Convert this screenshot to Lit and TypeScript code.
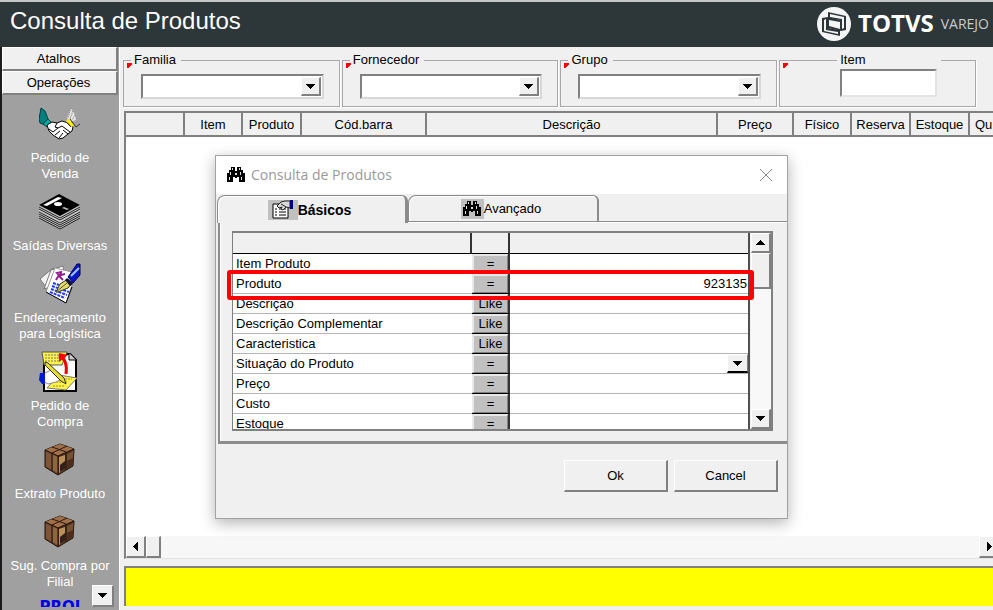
import { LitElement, html, css } from "lit";
import { customElement } from "lit/decorators.js";
import { classMap } from "lit/directives/class-map.js";

const arrow = (dir: "down" | "up" | "left" | "right") => {
  const d = {
    down: "M0 0H9V1H8V2H7V3H6V4H5V5H4V4H3V3H2V2H1V1H0Z",
    up: "M4 0H5V1H6V2H7V3H8V4H9V5H0V4H1V3H2V2H3V1H4Z",
    left: "M5 0V9H4V8H3V7H2V6H1V5H0V4H1V3H2V2H3V1H4V0Z",
    right: "M0 0V9H1V8H2V7H3V6H4V5H5V4H4V3H3V2H2V1H1V0Z",
  }[dir];
  const flat = dir === "down" || dir === "up";
  return html`<svg width=${flat ? 9 : 5} height=${flat ? 5 : 9} viewBox=${flat ? "0 0 9 5" : "0 0 5 9"} aria-hidden="true"><path d=${d} fill="#000" /></svg>`;
};

const handshake = html`<svg width="42" height="34" viewBox="0 0 42 34" aria-hidden="true">
  <path d="M2 1L6 4 9 12 6 18 1 16 0 12Z" fill="#008080" stroke="#003c3c" />
  <path d="M4 17L9 12 12 15 8 20Z" fill="#00a8a8" stroke="#004848" />
  <path d="M8 18L13 15 18 16 23 14 29 16 34 20 33 24 29 27 24 31 20 32 14 28 10 24Z" fill="#fff" stroke="#000" />
  <path d="M18 16L16 20 19 21 23 19 31 25M14 25L19 21M16 28L21 24M20 31L24 26M24 23L29 27M10 22L14 25" fill="none" stroke="#000" />
  <path d="M32 1L36 8 37 13 31 15 28 11Z" fill="#e4e4e4" />
  <path d="M32 1L29 11M34 4L31 12M36 8L33 13" stroke="#777" fill="none" stroke-dasharray="1 1" />
  <path d="M28 13L34 19" stroke="#ffee00" stroke-width="3" />
  <path d="M27 15L32 20M31 12L37 20 41 17" stroke="#333" fill="none" />
</svg>`;

const disks = html`<svg width="42" height="36" viewBox="0 0 42 36" aria-hidden="true">
  <path d="M0 11L20 0 41 11V24L21 35 0 24Z" fill="#c4c4c4" />
  <path d="M0 13L21 24 41 13M0 15L21 26 41 15M0 18L21 29 41 18M0 20L21 31 41 20M0 22L21 33 41 22M0 24L21 35 41 24" fill="none" stroke="#222" />
  <path d="M0 11L20 0 41 11 21 22Z" fill="#000" />
  <path d="M4 11L19 3 23 4 8 12Z" fill="#fff" />
  <ellipse cx="19" cy="10" rx="4" ry="2" fill="#fff" />
  <path d="M23 14L25 13 30 15 28 16Z" fill="#bbb" />
</svg>`;

const notes = html`<svg width="42" height="42" viewBox="0 0 42 42" aria-hidden="true">
  <path d="M1 16L14 5 24 17 7 24Z" fill="#f2f2f2" stroke="#777" />
  <path d="M5 26L12 7 24 3 26 18Z" fill="#fff" stroke="#777" />
  <path d="M16 5L37 10 27 40 7 29Z" fill="#fff" stroke="#999" />
  <path d="M33 24L27 40 7 29" fill="none" stroke="#000" />
  <path d="M17 17L20 12 18 10 22 9 21 14 24 17M22 12L26 11" stroke="#90208c" stroke-width="2" fill="none" />
  <path d="M14 20L20 22M13 23L30 29M12 26L28 32M11 29L26 35" stroke="#2038ff" stroke-width="2" stroke-dasharray="3 1" />
  <path d="M17 29L21 21 29 16 33 20 29 25 19 29Z" fill="#e8dc60" stroke="#333" />
  <path d="M17 29L28 20" stroke="#555" />
  <path d="M28 15L34 21 31 23 26 17Z" fill="#101040" />
  <path d="M29 14L38 1H41V12L34 20Z" fill="#0818c8" stroke="#000050" />
  <path d="M32 13L40 5" stroke="#a0c8ff" stroke-width="2" />
</svg>`;

const order = html`<svg width="42" height="42" viewBox="0 0 42 42" aria-hidden="true">
  <path d="M5 3H31L37 9V40H5Z" fill="#fff" stroke="#000" stroke-width="2" />
  <path d="M30 2V9H37" fill="#ccc" stroke="#000" />
  <path d="M3 1H28L23 14H5Z" fill="#fff34a" stroke="#555" />
  <path d="M6 4H24M6 7H23M6 10H21" stroke="#777" stroke-dasharray="2 1" />
  <path d="M20 4Q29 9 27 23" fill="none" stroke="#f00000" stroke-width="3" />
  <path d="M20 11L20 2 29 4Z" fill="#f00" />
  <path d="M8 37L20 24 38 27 27 39Z" fill="#fff34a" stroke="#777" />
  <path d="M14 35H25M17 31H29M20 28H33" stroke="#9a9020" stroke-dasharray="2 1" />
  <path d="M4 23L12 19 20 22 25 27 17 31 9 33 4 30Z" fill="#fff" stroke="#888" />
  <path d="M1 22H6V33H3L0 29Z" fill="#0018d0" />
  <path d="M6 11L9 12 25 27 27 33 22 30 6 14Z" fill="#e8dc30" stroke="#333" />
</svg>`;

const box = html`<svg width="34" height="34" viewBox="0 0 34 34" aria-hidden="true">
  <path d="M2 7L17 1 31 6 30 23 15 32 2 24Z" fill="#6d462d" stroke="#1c100a" />
  <path d="M2 7L17 1 31 6 15 13Z" fill="#a27048" />
  <path d="M15 13L31 6 30 23 15 32Z" fill="#4c2e1c" />
  <path d="M9 4L23 9V27" fill="none" stroke="#2a1810" />
  <path d="M24 3L9 10V28" fill="none" stroke="#2a1810" />
  <path d="M3 9L8 11V26L3 23Z" fill="#7d5638" />
  <path d="M10 12L15 14V30L10 27Z" fill="#8d6540" />
  <path d="M16 14L22 12V26L16 30Z" fill="#b98f5c" />
  <path d="M17 22L22 18V26L17 29Z" fill="#342015" />
  <path d="M24 11L30 8V15L24 18Z" fill="#765034" />
  <path d="M2 7L15 13 31 6M15 13V32" fill="none" stroke="#1c100a" />
</svg>`;

const binoculars = html`<svg width="18" height="16" viewBox="0 0 18 16" aria-hidden="true">
  <path d="M4 0H8V4H10V0H14V3H16V6H18V15H12V10H10V11H8V10H6V15H0V6H2V3H4Z" fill="#000" />
  <path d="M5 1H6V3H5ZM12 1H13V3H12ZM3 5H4V8H3ZM8 6H10V8H8ZM13 5H14V8H13ZM2 10H3V13H2ZM14 10H15V13H14Z" fill="#ddd" />
</svg>`;

const propertySheet = html`<svg width="22" height="19" viewBox="0 0 22 19" aria-hidden="true">
  <path d="M1 4H16V18H1Z" fill="#fff" stroke="#000" />
  <path d="M3 9H5M7 9H14M3 12H5M7 12H14M3 15H5M7 15H14" stroke="#000" />
  <path d="M5 6L9 2 13 1 18 1V8L14 7 11 10 9 9 10 7 7 8Z" fill="#d8d8d8" stroke="#222" />
  <path d="M9 4L14 7" stroke="#222" />
  <path d="M18 0H21V9H18Z" fill="#000080" />
</svg>`;

const logo = html`<svg class="mark" width="36" height="36" viewBox="0 0 36 36" aria-hidden="true">
  <circle cx="18" cy="18" r="17" fill="#f4f6f6" />
  <path d="M12 6L30 10V24L25 25V14L12 12Z" fill="#2d3638" />
  <path d="M6 12L12 11V22L24 24V30L6 26Z" fill="#2d3638" />
  <path d="M14 8L28 11V22L26 23V13L14 11Z" fill="#f4f6f6" />
  <path d="M8 14L10 13V24L22 26V28L8 25Z" fill="#f4f6f6" />
  <path d="M12 11L25 14V25L12 22Z" fill="#2d3638" />
  <path d="M13 14L24 16V23L13 20Z" fill="#f4f6f6" />
</svg>`;

const OPERATIONS = [
  { label: "Pedido de\nVenda", icon: handshake },
  { label: "Saídas Diversas", icon: disks },
  { label: "Endereçamento\npara Logística", icon: notes },
  { label: "Pedido de\nCompra", icon: order },
  { label: "Extrato Produto", icon: box },
  { label: "Sug. Compra por\nFilial", icon: box },
];

const COLUMNS = [
  ["", "w59"], ["Item", "w58"], ["Produto", "w59"], ["Cód.barra", "w125"], ["Descrição", ""],
  ["Preço", "w76"], ["Físico", "w58"], ["Reserva", "w59"], ["Estoque", "w59"], ["Qu", "last"],
];

const CRITERIA = [
  { name: "Item Produto", op: "=" },
  { name: "Produto", op: "=", value: "923135" },
  { name: "Descrição", op: "Like" },
  { name: "Descrição Complementar", op: "Like" },
  { name: "Caracteristica", op: "Like" },
  { name: "Situação do Produto", op: "=", list: true },
  { name: "Preço", op: "=" },
  { name: "Custo", op: "=" },
  { name: "Estoque", op: "=" },
];

const base = css`
  * { box-sizing: border-box; }
  svg { display: block; flex: none; }
  button, input, select { font: inherit; color: inherit; margin: 0; border-radius: 0; outline: none; }
  .bevel {
    display: flex; align-items: center; justify-content: center; padding: 0;
    background: #f0f0f0; border: 1px solid; border-width: 1px 2px 2px 1px;
    border-color: #fff #808080 #808080 #fff;
  }
`;

@customElement("side-bar")
class SideBar extends LitElement {
  static styles = [base, css`
    :host {
      position: relative; display: flex; flex-direction: column; overflow: hidden;
      background: #a0a0a0; border-left: 2px solid #1c1c1c; border-right: 1px solid #a0a0a0;
    }
    .tab { flex: none; height: 24px; padding: 1px 2px 0 0; }
    .list { flex: 1; min-height: 0; display: flex; flex-direction: column; gap: 10px; padding-top: 9px; margin-bottom: 3px; overflow: hidden; }
    .item {
      flex: none; display: flex; flex-direction: column; align-items: center; gap: 6px;
      padding: 0 4px; border: 0; background: none; color: #fff; line-height: 16px;
    }
    .picture { display: flex; height: 40px; align-items: center; justify-content: center; }
    .label { text-align: center; white-space: pre; }
    .prom { flex: none; align-self: center; padding: 0; border: 0; background: none; color: #0000f0; font: 700 15px/14px "DejaVu Sans", sans-serif; }
    .more { position: absolute; right: 4px; bottom: 3px; width: 22px; height: 22px; }
  `];
  render() {
    return html`
      <button class="tab bevel">Atalhos</button>
      <button class="tab bevel">Operações</button>
      <div class="list">
        ${OPERATIONS.map(o => html`<button class="item"><span class="picture">${o.icon}</span><span class="label">${o.label}</span></button>`)}
        <button class="prom">PROI</button>
      </div>
      <button class="more bevel" aria-label="Mais operações">${arrow("down")}</button>`;
  }
}

@customElement("filter-bar")
class FilterBar extends LitElement {
  static styles = [base, css`
    :host { display: grid; grid-template-columns: repeat(3, 217fr) 197fr; gap: 2px; padding: 5px 17px 4px 0; }
    fieldset {
      position: relative; min-width: 0; height: 55px; margin: 0; padding: 6px 15px 0 17px;
      border: 1px solid #a8a8a8; box-shadow: 1px 1px 0 #fff;
    }
    legend { margin-left: -10px; padding: 0 5px 0 3px; line-height: 16px; }
    .flag { position: absolute; left: 3px; top: -5px; width: 5px; height: 5px; background: linear-gradient(135deg, #f00 60%, transparent 61%); }
    .combo { display: flex; height: 25px; padding: 1px; background: #fff; border: 2px solid; border-color: #808080 #d8d8d8 #d8d8d8 #808080; }
    select { appearance: none; flex: 1; min-width: 0; border: 0; background: #fff; }
    .drop { width: 20px; pointer-events: none; }
    .single { padding: 1px 38px 0 60px; }
    .single legend { margin-left: -3px; width: 104px; }
    .code { display: block; width: 100%; height: 28px; background: #fff; border: 2px solid; border-color: #808080 #e4e4e4 #e4e4e4 #808080; }
  `];
  render() {
    return html`
      ${["Familia", "Fornecedor", "Grupo"].map(n => html`
        <fieldset>
          <legend>${n}</legend><span class="flag"></span>
          <div class="combo"><select aria-label=${n}></select><span class="drop bevel">${arrow("down")}</span></div>
        </fieldset>`)}
      <fieldset class="single">
        <legend><label for="code">Item</label></legend><span class="flag"></span>
        <input class="code" id="code" type="text" />
      </fieldset>`;
  }
}

@customElement("product-grid")
class ProductGrid extends LitElement {
  static styles = [base, css`
    :host {
      display: flex; flex-direction: column; min-height: 0; background: #fff; margin-left: 1px;
      border-top: 2px solid #808080; border-left: 2px solid #808080; border-bottom: 1px solid #e4e4e4; overflow: hidden;
    }
    .view { flex: 1; min-height: 0; overflow: hidden; }
    table { width: 100%; table-layout: fixed; border-collapse: separate; border-spacing: 0; }
    th {
      height: 24px; padding: 2px 0 0; font-weight: 400; background: #f0f0f0; white-space: nowrap;
      border-right: 2px solid #808080; border-bottom: 2px solid #808080; overflow: hidden;
    }
    .w58 { width: 58px; } .w59 { width: 59px; } .w76 { width: 76px; } .w125 { width: 125px; }
    .last { width: 23px; padding-left: 5px; text-align: left; border-right: 0; }
    .bar { display: flex; height: 22px; background: #f7f7f7; }
    .bar .bevel { width: 20px; }
    .bar .thumb { width: 15px; }
    .track { flex: 1; }
    .bar .forward { width: 14px; border-right: 0; justify-content: flex-end; padding-right: 1px; }
  `];
  render() {
    return html`
      <div class="view">
        <table>
          <thead><tr>${COLUMNS.map(([t, c]) => html`<th class=${c} scope="col">${t}</th>`)}</tr></thead>
        </table>
      </div>
      <div class="bar">
        <button class="bevel" aria-label="Rolar para a esquerda">${arrow("left")}</button>
        <div class="thumb bevel"></div>
        <div class="track"></div>
        <button class="forward bevel" aria-label="Rolar para a direita">${arrow("right")}</button>
      </div>`;
  }
}

@customElement("search-dialog")
class SearchDialog extends LitElement {
  static styles = [base, css`
    :host {
      display: flex; flex-direction: column; background: #f0f0f0; border: 1px solid #a2a2a2;
      box-shadow: 0 4px 14px rgba(0, 0, 0, 0.3);
    }
    .title { display: flex; align-items: center; gap: 6px; height: 38px; padding: 0 14px 0 11px; background: #fff; }
    h2 { flex: 1; margin: 0; font: 400 14px/20px "Open Sans", "Noto Sans", sans-serif; color: #999; }
    .close { padding: 0; border: 0; background: none; }
    .tabs { display: flex; height: 27px; padding: 1px 0 0 1px; }
    .tab {
      display: flex; align-items: center; justify-content: center; padding: 0 4px 0 0;
      width: 191px; height: 26px; background: #f0f0f0; border: 1px solid #8c8c8c; border-bottom: 0;
      border-right-width: 2px; border-top-left-radius: 8px; border-top-right-radius: 6px; box-shadow: inset 1px 1px 0 #fff;
    }
    .active { position: relative; height: 28px; border-right-width: 3px; font-weight: 700; font-size: 14px; }
    .glyph { display: flex; align-items: center; justify-content: center; width: 30px; height: 20px; background: #c0c0c0; }
    .small { width: 23px; }
    .panel { margin-left: 2px; padding: 9px 14px 10px 12px; border: solid #8c8c8c; border-width: 1px 0 3px 2px; box-shadow: inset 1px 1px 0 #fff; }
    .sheet { position: relative; display: flex; height: 200px; border: 2px solid #808080; border-left-width: 1px; }
    .rows { flex: 1; overflow: hidden; background: #fff; border-right: 2px solid #505050; }
    table { width: 100%; table-layout: fixed; border-collapse: separate; border-spacing: 0; }
    th { height: 21px; padding: 0; background: #f0f0f0; border-bottom: 1px solid #000; border-right: 2px solid #333; }
    .name { width: 239px; }
    .oper { width: 38px; }
    .entry { border-right: 0; }
    td { height: 20px; padding: 0; line-height: 18px; border-bottom: 1px solid #b4b4b4; }
    .field { padding-left: 3px; }
    .opcell { background: #c0c0c0; border-right: 2px solid #333; border-bottom-color: #000; }
    .op { width: 100%; height: 19px; background: #c0c0c0; border-width: 2px 1px 1px 2px; border-color: #e8e8e8 #808080 #808080 #e8e8e8; }
    .value { display: block; width: 100%; height: 19px; padding: 0 1px 0 0; border: 0; background: #fff; text-align: right; }
    .pick { display: flex; height: 19px; }
    .pick select { appearance: none; flex: 1; min-width: 0; border: 0; background: #fff; }
    .pick .bevel { width: 21px; border-bottom-color: #000; border-right-width: 1px; }
    .scroll { display: flex; flex-direction: column; width: 20px; margin-left: 1px; background: #f8f8f8; }
    .scroll .bevel { height: 20px; }
    .scroll .thumb { height: 36px; }
    .track { flex: 1; }
    .mark { position: absolute; left: -6px; right: 17px; top: 37px; height: 30px; border: 4px solid #f00; border-radius: 3px; pointer-events: none; }
    .actions { display: flex; justify-content: flex-end; gap: 6px; padding: 16px 9px 26px 0; }
    .action { width: 104px; height: 32px; }
  `];
  render() {
    return html`
      <div class="title">
        ${binoculars}
        <h2>Consulta de Produtos</h2>
        <button class="close" aria-label="Fechar"><svg width="14" height="14" viewBox="0 0 14 14" aria-hidden="true"><path d="M1 1L13 13M13 1L1 13" stroke="#888" fill="none" /></svg></button>
      </div>
      <div class="tabs" role="tablist">
        <button class=${classMap({ tab: true, active: true })} role="tab" aria-selected="true"><span class="glyph">${propertySheet}</span>Básicos</button>
        <button class="tab" role="tab" aria-selected="false"><span class="glyph small">${binoculars}</span>Avançado</button>
      </div>
      <div class="panel" role="tabpanel">
        <div class="sheet">
          <div class="rows">
            <table>
              <thead><tr><th class="name"></th><th class="oper"></th><th class="entry"></th></tr></thead>
              <tbody>
                ${CRITERIA.map(c => html`<tr>
                  <td class="field">${c.name}</td>
                  <td class="opcell"><button class="op bevel">${c.op}</button></td>
                  <td>${c.list
                    ? html`<div class="pick"><select aria-label=${c.name}></select><span class="bevel">${arrow("down")}</span></div>`
                    : html`<input class="value" type="text" aria-label=${c.name} .value=${c.value ?? ""} />`}</td>
                </tr>`)}
              </tbody>
            </table>
          </div>
          <div class="scroll">
            <button class="bevel" aria-label="Rolar para cima">${arrow("up")}</button>
            <div class="thumb bevel"></div>
            <div class="track"></div>
            <button class="bevel" aria-label="Rolar para baixo">${arrow("down")}</button>
          </div>
          <div class="mark"></div>
        </div>
      </div>
      <div class="actions">
        <button class="action bevel">Ok</button>
        <button class="action bevel">Cancel</button>
      </div>`;
  }
}

@customElement("app-root")
class AppRoot extends LitElement {
  static styles = [base, css`
    :host {
      position: relative; display: flex; flex-direction: column; height: 100vh; overflow: hidden;
      background: #f0f0f0; color: #000; font: 13px/16px "Liberation Sans", Arial, sans-serif;
    }
    header {
      flex: none; display: flex; align-items: center; height: 47px; padding: 0 4px 0 10px;
      background: #2d3638; border-top: 2px solid #c4c8c8; color: #fff;
    }
    h1 { flex: 1; margin: 0; padding-bottom: 7px; font-size: 24px; line-height: 28px; font-weight: 400; }
    .mark { margin-right: 6px; }
    .brand { display: flex; align-items: center; padding-bottom: 2px; font-family: "Open Sans", sans-serif; }
    .totvs { font-size: 24px; line-height: 28px; font-weight: 700; margin-right: 7px; padding-bottom: 2px; }
    .varejo { font-size: 14px; line-height: 20px; color: #c8cccc; }
    .body { flex: 1; min-height: 0; display: grid; grid-template-columns: 119px minmax(0, 1fr); }
    main { display: flex; flex-direction: column; min-height: 0; padding: 0 0 4px 3px; border-left: 1px solid #fff; }
    product-grid { flex: 1; }
    .notice { flex: none; height: 40px; margin: 7px 0 0 1px; background: #ff0; border: solid #808080; border-width: 2px 0 0 2px; }
    search-dialog { position: absolute; left: 215px; top: 155px; width: 573px; }
  `];
  render() {
    return html`
      <header>
        <h1>Consulta de Produtos</h1>
        <div class="brand">${logo}<span class="totvs">TOTVS</span><span class="varejo">VAREJO</span></div>
      </header>
      <div class="body">
        <side-bar></side-bar>
        <main>
          <filter-bar></filter-bar>
          <product-grid></product-grid>
          <div class="notice"></div>
        </main>
      </div>
      <search-dialog role="dialog" aria-label="Consulta de Produtos"></search-dialog>`;
  }
}
